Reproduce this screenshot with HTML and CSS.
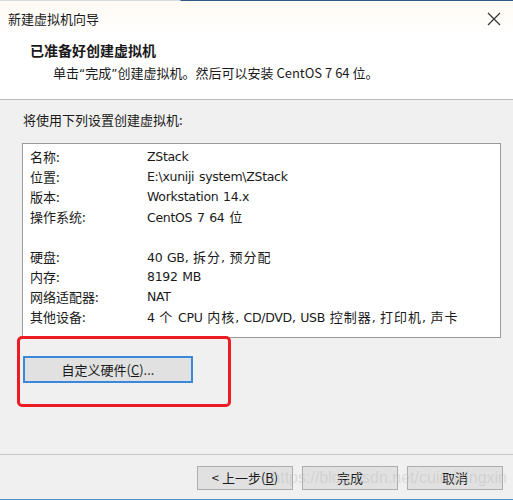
FILE: index.html
```html
<!DOCTYPE html>
<html lang="zh-CN">
<head>
<meta charset="utf-8">
<title>新建虚拟机向导</title>
<link rel="stylesheet" href="styles.css">
</head>
<body>
<div class="window">
  <div class="topline"></div>
  <div class="top">
    <div class="titlebar">
      <span class="title">新建虚拟机向导</span>
      <svg class="close" width="14" height="14" viewBox="0 0 14 14"><path d="M1 1 L13 13 M13 1 L1 13" stroke="#333" stroke-width="1.2" fill="none"/></svg>
    </div>
    <div class="header">
      <div class="h1">已准备好创建虚拟机</div>
      <div class="sub">单击<span class="q">“</span>完成<span class="q">”</span>创建虚拟机。然后可以安装 CentOS 7 64 位。</div>
    </div>
  </div>
  <div class="main">
    <div class="intro">将使用下列设置创建虚拟机:</div>
    <div class="box">
      <div class="row"><span class="k">名称:</span><span class="v">ZStack</span></div>
      <div class="row"><span class="k">位置:</span><span class="v">E:\xuniji system\ZStack</span></div>
      <div class="row"><span class="k">版本:</span><span class="v">Workstation 14.x</span></div>
      <div class="row"><span class="k">操作系统:</span><span class="v">CentOS 7 64 <span class="c">位</span></span></div>
      <div class="row blank"></div>
      <div class="row"><span class="k">硬盘:</span><span class="v">40 GB, <span class="c">拆分</span>, <span class="c">预分配</span></span></div>
      <div class="row"><span class="k">内存:</span><span class="v">8192 MB</span></div>
      <div class="row"><span class="k">网络适配器:</span><span class="v">NAT</span></div>
      <div class="row"><span class="k">其他设备:</span><span class="v">4 <span class="c">个</span> CPU <span class="c">内核</span>, CD/DVD, USB <span class="c">控制器</span>, <span class="c">打印机</span>, <span class="c">声卡</span></span></div>
    </div>
    <div class="custom-wrap">
      <button class="btn custom">自定义硬件(<u>C</u>)...</button>
      <div class="redmark"></div>
    </div>
  </div>
  <div class="footer">
    <button class="btn">&lt; 上一步(<u>B</u>)</button>
    <button class="btn">完成</button>
    <button class="btn">取消</button>
    <span class="watermark">https://blog.csdn.net/cuiruixingxin</span>
  </div>
  <div class="bottomline"></div>
</div>
</body>
</html>
```

FILE: styles.css
```css
html, body {
  margin: 0;
  padding: 0;
}
body {
  width: 513px;
  height: 500px;
  overflow: hidden;
  background: #f0f0f0;
  font-family: "Noto Sans CJK SC", "DejaVu Sans", sans-serif;
  font-size: 13px;
  color: #1a1a1a;
}
.window {
  width: 513px;
  height: 500px;
  display: flex;
  flex-direction: column;
  position: relative;
}
.topline {
  height: 1px;
  background: linear-gradient(to right, #d4dae0 0, #d4dae0 180px, #2f5b86 181px, #2f5b86 100%);
}
.top {
  background: #ffffff;
  height: 99px;
  border-bottom: 1px solid #b9b9b9;
  box-sizing: border-box;
}
.titlebar {
  height: 35px;
  padding: 0 12px 0 8px;
  display: flex;
  align-items: center;
  justify-content: space-between;
  background: linear-gradient(#fffaf3, #ffffff);
}
.title {
  font-size: 13px;
  line-height: 20px;
}
.close {
  display: block;
}
.header {
  padding-top: 4px;
}
.h1 {
  padding-left: 30px;
  font-weight: bold;
  font-size: 14px;
  line-height: 20px;
}
.sub {
  padding-left: 53px;
  margin-top: 3px;
  line-height: 20px;
}
.q {
  font-family: "DejaVu Sans", sans-serif;
  font-size: 12px;
}
.main {
  flex: 1;
  padding: 10px 12px 0 22px;
  position: relative;
  border-bottom: 1px solid #c8c8c8;
}
.intro {
  line-height: 20px;
  padding-left: 1px;
}
.box {
  margin-top: 13px;
  background: #ffffff;
  border: 1px solid #9a9a9a;
  height: 195px;
  box-sizing: border-box;
  padding: 3px 0 0 7px;
}
.row {
  display: flex;
  height: 20px;
  line-height: 20px;
  white-space: nowrap;
}
.k {
  width: 117px;
  flex: none;
}
.v {
  font-family: "DejaVu Sans", "Noto Sans CJK SC", sans-serif;
  font-size: 12.5px;
  letter-spacing: -0.3px;
  word-spacing: 1px;
}
.c {
  font-family: "Noto Sans CJK SC", sans-serif;
  font-size: 13px;
  letter-spacing: 1px;
}
.custom-wrap {
  position: relative;
  padding-top: 18px;
}
.btn {
  font-family: "Noto Sans CJK SC", "DejaVu Sans", sans-serif;
  font-size: 13px;
  color: #1a1a1a;
  background: #e1e1e1;
  border: 1px solid #adadad;
  width: 96px;
  height: 24px;
  padding: 0;
  line-height: 20px;
}
.btn u {
  text-decoration: underline;
}
.custom {
  width: 170px;
  height: 27px;
  border: 2px solid #3b87d9;
  display: block;
  margin-left: 1px;
}
.redmark {
  position: absolute;
  left: -5px;
  top: -2px;
  width: 214px;
  height: 71px;
  box-sizing: border-box;
  border: 3px solid #ec1c24;
  border-radius: 5px;
}
.footer {
  height: 44px;
  display: flex;
  justify-content: flex-end;
  align-items: flex-start;
  gap: 9px;
  padding: 11px 10px 0 0;
  box-sizing: border-box;
  position: relative;
}
.watermark {
  position: absolute;
  right: 6px;
  top: 14px;
  font-family: "Liberation Sans", sans-serif;
  font-size: 16px;
  color: rgba(190, 190, 190, 0.45);
  pointer-events: none;
  white-space: nowrap;
}
.bottomline {
  height: 1px;
  background: #4a90c8;
}
```
